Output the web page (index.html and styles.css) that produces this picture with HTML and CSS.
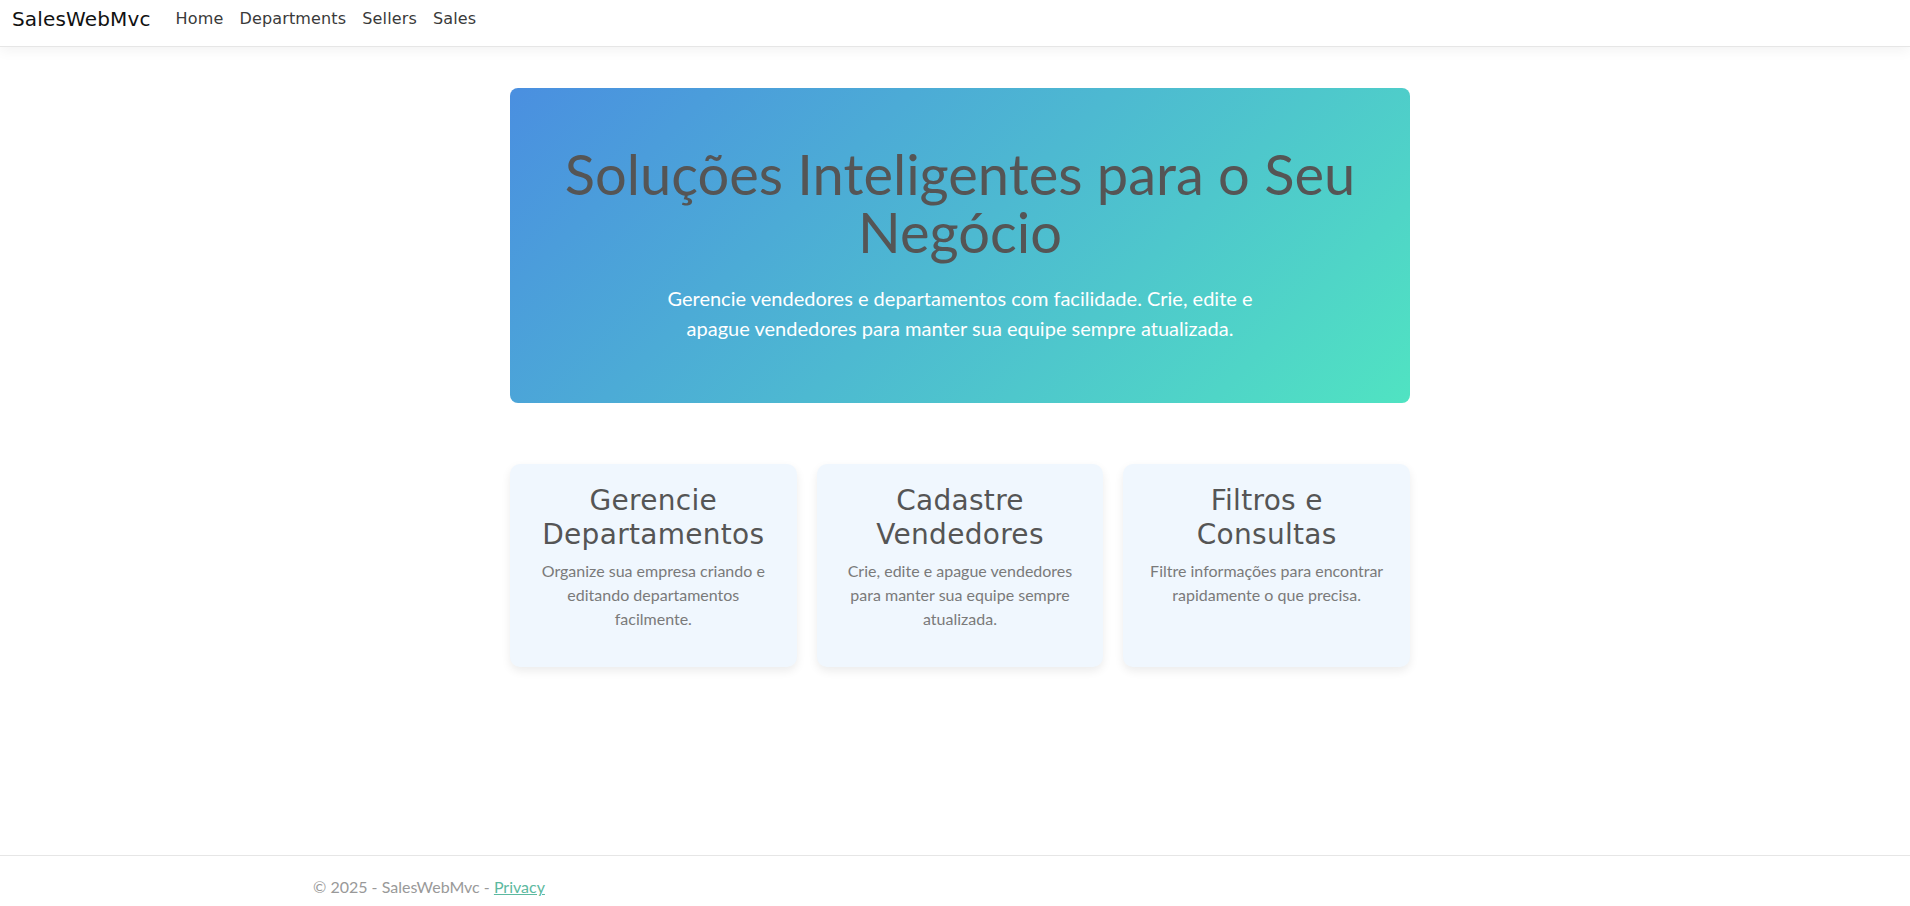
FILE: index.html
```html
<!DOCTYPE html>
<html lang="pt-BR">
<head>
<meta charset="utf-8">
<title>Home Page - SalesWebMvc</title>
<link rel="stylesheet" href="styles.css">
</head>
<body>
<header class="navbar">
  <a class="brand" href="#">SalesWebMvc</a>
  <nav class="nav-links">
    <a href="#">Home</a>
    <a href="#">Departments</a>
    <a href="#">Sellers</a>
    <a href="#">Sales</a>
  </nav>
</header>
<main class="main">
  <section class="hero">
    <h1 class="hero-title">Soluções Inteligentes para o Seu Negócio</h1>
    <p class="hero-lead">Gerencie vendedores e departamentos com facilidade. Crie, edite e apague vendedores para manter sua equipe sempre atualizada.</p>
  </section>
  <section class="features">
    <div class="card">
      <h3 class="card-title">Gerencie Departamentos</h3>
      <p class="card-text">Organize sua empresa criando e editando departamentos facilmente.</p>
    </div>
    <div class="card">
      <h3 class="card-title">Cadastre Vendedores</h3>
      <p class="card-text">Crie, edite e apague vendedores para manter sua equipe sempre atualizada.</p>
    </div>
    <div class="card">
      <h3 class="card-title">Filtros e Consultas</h3>
      <p class="card-text">Filtre informações para encontrar rapidamente o que precisa.</p>
    </div>
  </section>
</main>
<footer class="footer">
  <div class="footer-inner">© 2025 - SalesWebMvc - <a href="#">Privacy</a></div>
</footer>
</body>
</html>
```

FILE: styles.css
```css
* { box-sizing: border-box; }
html, body { margin: 0; padding: 0; }
body {
  height: 906px;
  overflow: hidden;
  display: flex;
  flex-direction: column;
  font-family: "Lato", "Noto Sans", sans-serif;
  font-size: 16px;
  line-height: 1.5;
  color: #212529;
  background: #fff;
}
.navbar {
  height: 47px;
  flex: 0 0 auto;
  display: flex;
  align-items: flex-start;
  padding: 6px 12px 0 12px;
  background: #fff;
  border-bottom: 1px solid #e6e6e6;
  box-shadow: 0 4px 12px rgba(0, 0, 0, 0.05);
  position: relative;
  z-index: 2;
}
.brand {
  font-family: "DejaVu Sans", sans-serif;
  font-size: 20px;
  letter-spacing: 0.15px;
  line-height: 26px;
  color: #111;
  text-decoration: none;
  margin-right: 17px;
}
.nav-links { display: flex; }
.nav-links a {
  font-family: "DejaVu Sans", sans-serif;
  font-size: 16px;
  letter-spacing: 0.15px;
  line-height: 26px;
  color: #3a3a3a;
  text-decoration: none;
  padding: 0 8px;
}
.main {
  flex: 1 1 auto;
  width: 900px;
  margin-left: calc(50% - 445px);
  padding-top: 41px;
}
.hero {
  height: 315px;
  border-radius: 8px;
  background: linear-gradient(135deg, #4a8fe0 0%, #50e3c2 100%);
  padding: 57px 40px 0;
  text-align: center;
}
.hero-title {
  margin: 0 0 23px;
  font-family: "Lato", "Noto Sans", sans-serif;
  font-weight: 400;
  font-size: 56px;
  line-height: 57.6px;
  color: #555;
}
.hero-lead {
  margin: 0 auto;
  max-width: 610px;
  font-size: 20px;
  line-height: 30px;
  color: #fff;
}
.features {
  margin-top: 61px;
  display: grid;
  grid-template-columns: repeat(3, 1fr);
  gap: 20px;
}
.card {
  height: 203px;
  background: #f0f7fe;
  border-radius: 10px;
  box-shadow: 0 4px 10px rgba(0, 0, 0, 0.08);
  padding: 20px;
  text-align: center;
}
.card-title {
  margin: 0 0 8px;
  font-family: "DejaVu Sans", sans-serif;
  font-weight: 400;
  font-size: 28px;
  letter-spacing: 0.3px;
  line-height: 33.6px;
  color: #555;
}
.card-text {
  margin: 0;
  font-size: 16px;
  line-height: 24px;
  color: #7a7a7a;
}
.footer {
  flex: 0 0 51px;
  border-top: 1px solid #e6e6e6;
}
.footer-inner {
  max-width: 1320px;
  margin: 0 auto;
  padding: 19px 18px 0;
  font-size: 16px;
  line-height: 24px;
  color: #999;
  white-space: nowrap;
}
.footer-inner a {
  color: #5cb9a0;
}
```
